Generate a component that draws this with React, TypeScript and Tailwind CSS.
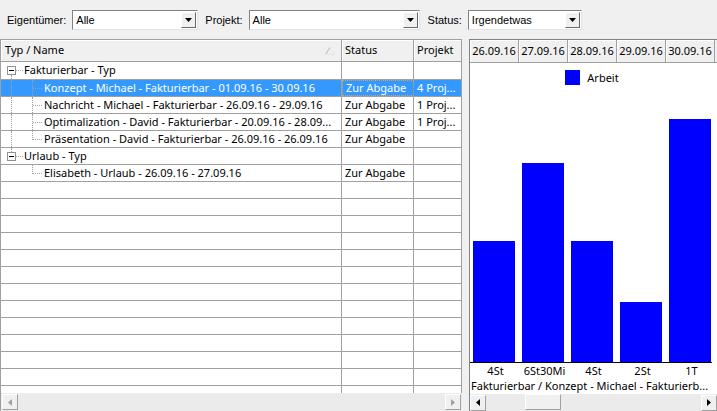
import React from "react";

type Row = {
  name: string;
  level: 0 | 1;
  status?: string;
  projekt?: string;
  selected?: boolean;
  last?: boolean;
  parentLast?: boolean;
};

const rows: Row[] = [
  { name: "Fakturierbar - Typ", level: 0 },
  {
    name: "Konzept - Michael - Fakturierbar - 01.09.16 - 30.09.16",
    level: 1,
    status: "Zur Abgabe",
    projekt: "4 Proj...",
    selected: true,
  },
  {
    name: "Nachricht - Michael - Fakturierbar - 26.09.16 - 29.09.16",
    level: 1,
    status: "Zur Abgabe",
    projekt: "1 Proj...",
  },
  {
    name: "Optimalization - David - Fakturierbar - 20.09.16 - 28.09...",
    level: 1,
    status: "Zur Abgabe",
    projekt: "1 Proj...",
  },
  {
    name: "Präsentation - David - Fakturierbar - 26.09.16 - 26.09.16",
    level: 1,
    status: "Zur Abgabe",
    last: true,
  },
  { name: "Urlaub - Typ", level: 0, parentLast: true },
  {
    name: "Elisabeth - Urlaub - 26.09.16 - 27.09.16",
    level: 1,
    status: "Zur Abgabe",
    last: true,
    parentLast: true,
  },
];

const days = ["26.09.16", "27.09.16", "28.09.16", "29.09.16", "30.09.16"];

const bars = [
  { label: "4St", height: 121 },
  { label: "6St30Mi", height: 199 },
  { label: "4St", height: 121 },
  { label: "2St", height: 60 },
  { label: "1T", height: 243 },
];

function Arrow({ dir, color }: { dir: "down" | "left" | "right"; color: string }) {
  if (dir === "down")
    return (
      <svg width="7" height="4" viewBox="0 0 7 4">
        <path d="M0 0h7L3.5 4z" fill={color} />
      </svg>
    );
  if (dir === "left")
    return (
      <svg width="4" height="7" viewBox="0 0 4 7">
        <path d="M4 0v7L0 3.5z" fill={color} />
      </svg>
    );
  return (
    <svg width="4" height="7" viewBox="0 0 4 7">
      <path d="M0 0v7l4-3.5z" fill={color} />
    </svg>
  );
}

function Combo({ value, className }: { value: string; className: string }) {
  return (
    <div
      className={`flex h-[20px] items-stretch border border-t-[#828282] border-l-[#828282] border-r-[#e3e3e3] border-b-[#e3e3e3] bg-white ${className}`}
    >
      <div className="flex flex-1 items-center pl-[3px] text-[11px] text-black">{value}</div>
      <div className="my-[1px] mr-[1px] flex w-[15px] items-center justify-center border border-t-white border-l-white border-r-[#696969] border-b-[#696969] bg-[#f0f0f0]">
        <Arrow dir="down" color="#000" />
      </div>
    </div>
  );
}

function ScrollBtn({ dir, disabled }: { dir: "left" | "right"; disabled?: boolean }) {
  return (
    <div className="flex h-[16px] w-[16px] items-center justify-center border border-t-white border-l-white border-r-[#a0a0a0] border-b-[#a0a0a0] bg-[#f0f0f0]">
      <Arrow dir={dir} color={disabled ? "#a0a0a0" : "#000"} />
    </div>
  );
}

function Dot({ className }: { className: string }) {
  return <div className={`absolute border-dotted border-[#a0a0a0] ${className}`} />;
}

function TreeCell({ row, first }: { row: Row; first: boolean }) {
  return (
    <div className="relative h-full">
      {row.level === 0 ? (
        <>
          {!first && <Dot className="left-[10px] top-0 h-[4px] border-l" />}
          {!row.parentLast && <Dot className="left-[10px] top-[13px] bottom-0 border-l" />}
          <Dot className="left-[15px] top-[8px] w-[7px] border-t" />
          <div className="absolute left-[6px] top-[4px] flex h-[9px] w-[9px] items-center justify-center border border-[#919191] bg-white">
            <div className="h-px w-[5px] bg-black" />
          </div>
        </>
      ) : (
        <>
          {!row.parentLast && <Dot className="left-[10px] top-0 bottom-0 border-l" />}
          <Dot className={`left-[31px] top-0 border-l ${row.last ? "h-[9px]" : "bottom-0"}`} />
          <Dot className="left-[32px] top-[8px] w-[9px] border-t" />
        </>
      )}
      <div
        className={`absolute top-0 flex h-full items-center whitespace-nowrap ${
          row.level === 0 ? "left-[23px]" : "left-[43px]"
        }`}
      >
        {row.name}
      </div>
    </div>
  );
}

export default function App() {
  const empty = Array.from({ length: 14 });
  return (
    <div className="flex h-[411px] w-[717px] flex-col overflow-hidden bg-[#f0f0f0] font-['Liberation_Sans',sans-serif] text-black">
      {/* filter bar */}
      <div className="flex h-[39px] items-center pl-[7px] pt-[1px] text-[11px]">
        <span className="mr-[6px]">Eigentümer:</span>
        <Combo value="Alle" className="w-[126px]" />
        <span className="ml-[7px] mr-[6px]">Projekt:</span>
        <Combo value="Alle" className="w-[171px]" />
        <span className="ml-[8px] mr-[6px]">Status:</span>
        <Combo value="Irgendetwas" className="w-[114px]" />
      </div>

      <div className="flex flex-1 overflow-hidden">
        {/* tree list */}
        <div className="flex w-[462px] flex-col border-l border-t border-[#a0a0a0] font-['Noto_Sans',sans-serif] text-[11px]">
          <div className="flex h-[22px] shrink-0 border-b border-[#a0a0a0] bg-[#f0f0f0]">
            <div className="relative flex w-[341px] items-center border-r border-[#a0a0a0] pl-[4px] shadow-[inset_1px_1px_0_#fff]">
              Typ / Name
              <svg className="absolute right-[6px] top-[7px]" width="10" height="8" viewBox="0 0 10 8">
                <path d="M0.5 7.5L5 0.5" stroke="#b8b8b8" fill="none" />
                <path d="M5 0.5L9.5 7.5H0.5" stroke="#e6e6e6" fill="none" />
              </svg>
            </div>
            <div className="flex w-[72px] items-center border-r border-[#a0a0a0] pl-[3px] shadow-[inset_1px_1px_0_#fff]">
              Status
            </div>
            <div className="flex w-[48px] items-center border-r border-[#a0a0a0] pl-[3px] shadow-[inset_1px_1px_0_#fff]">
              Projekt
            </div>
          </div>

          <div className="flex-1 overflow-hidden bg-white">
            {rows.map((row, i) => (
              <div
                key={i}
                className={`flex border-b border-[#a0a0a0] ${i === 0 ? "h-[18px]" : "h-[17px]"} ${
                  row.selected ? "bg-[#3399ff] text-white" : ""
                }`}
              >
                <div className="w-[341px] border-r border-[#a0a0a0]">
                  <TreeCell row={row} first={i === 0} />
                </div>
                <div
                  className={`flex w-[72px] items-center pl-[3px] whitespace-nowrap ${
                    row.selected
                      ? "border border-dotted border-[#d9a05b]"
                      : "border-r border-[#a0a0a0]"
                  }`}
                >
                  {row.status}
                </div>
                <div className="flex w-[48px] items-center overflow-hidden border-r border-[#a0a0a0] pl-[3px] whitespace-nowrap">
                  {row.projekt}
                </div>
              </div>
            ))}
            {empty.map((_, i) => (
              <div key={`e${i}`} className="flex h-[17px] border-b border-[#a0a0a0]">
                <div className="w-[341px] border-r border-[#a0a0a0]" />
                <div className="w-[72px] border-r border-[#a0a0a0]" />
                <div className="w-[48px] border-r border-[#a0a0a0]" />
              </div>
            ))}
          </div>

          <div className="flex h-[18px] shrink-0 items-center justify-between bg-[#ebebeb] px-[1px]">
            <ScrollBtn dir="left" disabled />
            <ScrollBtn dir="right" disabled />
          </div>
        </div>

        {/* splitter */}
        <div className="w-[7px] bg-[#f0f0f0]" />

        {/* chart */}
        <div className="flex flex-1 flex-col border-l border-t border-[#828282] font-['Noto_Sans',sans-serif] text-[11px]">
          <div className="flex h-[23px] shrink-0 border-b border-[#a0a0a0] bg-[#f0f0f0]">
            {days.map((d) => (
              <div
                key={d}
                className="flex w-[49px] items-center justify-center border-r border-[#a0a0a0] shadow-[inset_1px_1px_0_#fff]"
              >
                {d}
              </div>
            ))}
          </div>

          <div className="flex flex-1 flex-col bg-white">
            <div className="flex h-[22px] shrink-0 items-end justify-center pr-[3px]">
              <div className="h-[15px] w-[15px] bg-[#0000ff]" />
              <span className="ml-[7px] leading-[15px]">Arbeit</span>
            </div>
            <div className="flex w-[242px] flex-1 items-end border-b border-black">
              {bars.map((b, i) => (
                <div key={i} className="flex w-[49px] shrink-0 justify-center pl-[3px] pr-[4px]">
                  <div className="w-full bg-[#0000ff]" style={{ height: b.height }} />
                </div>
              ))}
            </div>
            <div className="flex h-[16px] shrink-0 items-center">
              {bars.map((b, i) => (
                <div key={i} className="w-[49px] shrink-0 pl-[2px] text-center">
                  {b.label}
                </div>
              ))}
            </div>
            <div className="flex h-[15px] shrink-0 items-center whitespace-nowrap pl-[1px]">
              Fakturierbar / Konzept - Michael - Fakturierb...
            </div>
          </div>

          <div className="relative flex h-[17px] shrink-0 items-center justify-between bg-[#ebebeb]">
            <ScrollBtn dir="left" />
            <div className="absolute left-[55px] top-0 h-[16px] w-[36px] border border-t-white border-l-white border-r-[#a0a0a0] border-b-[#a0a0a0] bg-[#f0f0f0]" />
            <ScrollBtn dir="right" />
          </div>
        </div>
      </div>
    </div>
  );
}
